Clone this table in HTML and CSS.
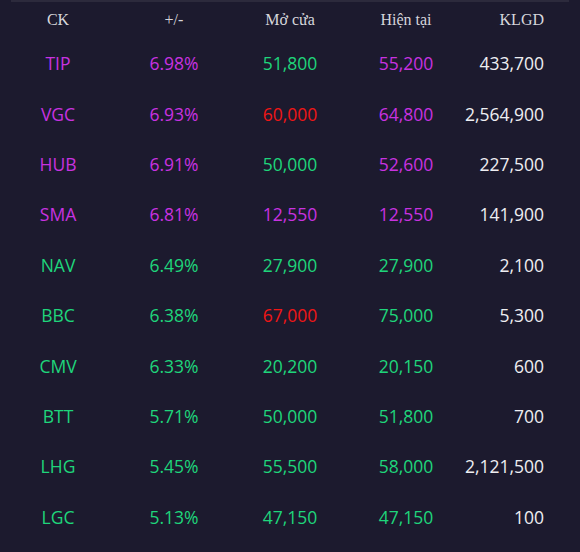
FILE: index.html
```html
<!DOCTYPE html>
<html lang="vi">
<head>
<meta charset="utf-8">
<link rel="stylesheet" href="styles.css">
</head>
<body>
<div class="strip"></div>
<div class="board">
  <div class="row head">
    <div class="c">CK</div><div class="c">+/-</div><div class="c">Mở cửa</div><div class="c">Hiện tại</div><div class="c r">KLGD</div>
  </div>
  <div class="row"><div class="c pu">TIP</div><div class="c pu">6.98%</div><div class="c gr">51,800</div><div class="c pu">55,200</div><div class="c r wh">433,700</div></div>
  <div class="row"><div class="c pu">VGC</div><div class="c pu">6.93%</div><div class="c rd">60,000</div><div class="c pu">64,800</div><div class="c r wh">2,564,900</div></div>
  <div class="row"><div class="c pu">HUB</div><div class="c pu">6.91%</div><div class="c gr">50,000</div><div class="c pu">52,600</div><div class="c r wh">227,500</div></div>
  <div class="row"><div class="c pu">SMA</div><div class="c pu">6.81%</div><div class="c pu">12,550</div><div class="c pu">12,550</div><div class="c r wh">141,900</div></div>
  <div class="row"><div class="c gr">NAV</div><div class="c gr">6.49%</div><div class="c gr">27,900</div><div class="c gr">27,900</div><div class="c r wh">2,100</div></div>
  <div class="row"><div class="c gr">BBC</div><div class="c gr">6.38%</div><div class="c rd">67,000</div><div class="c gr">75,000</div><div class="c r wh">5,300</div></div>
  <div class="row"><div class="c gr">CMV</div><div class="c gr">6.33%</div><div class="c gr">20,200</div><div class="c gr">20,150</div><div class="c r wh">600</div></div>
  <div class="row"><div class="c gr">BTT</div><div class="c gr">5.71%</div><div class="c gr">50,000</div><div class="c gr">51,800</div><div class="c r wh">700</div></div>
  <div class="row"><div class="c gr">LHG</div><div class="c gr">5.45%</div><div class="c gr">55,500</div><div class="c gr">58,000</div><div class="c r wh">2,121,500</div></div>
  <div class="row"><div class="c gr">LGC</div><div class="c gr">5.13%</div><div class="c gr">47,150</div><div class="c gr">47,150</div><div class="c r wh">100</div></div>
</div>
</body>
</html>
```
FILE: styles.css
```css
html, body {
  margin: 0;
  padding: 0;
  background: #1c1a2e;
  width: 580px;
  height: 552px;
  overflow: hidden;
}
.strip {
  height: 2px;
  margin: 0 11px;
  background: #2c2a3c;
}
.board {
  font-family: "Open Sans", "Noto Sans", sans-serif;
  font-size: 17.5px;
}
.row {
  display: grid;
  grid-template-columns: repeat(5, 1fr);
  height: 50.4px;
  align-items: center;
}
.row.head {
  height: 36px;
  font-family: "Liberation Serif", serif;
  font-size: 16px;
  color: #d6d6dc;
}
.c {
  text-align: center;
}
.c.r {
  text-align: right;
  padding-right: 36px;
}
.pu { color: #c832e0; }
.gr { color: #1fd57b; }
.rd { color: #f01616; }
.wh { color: #eeeef2; }
```
